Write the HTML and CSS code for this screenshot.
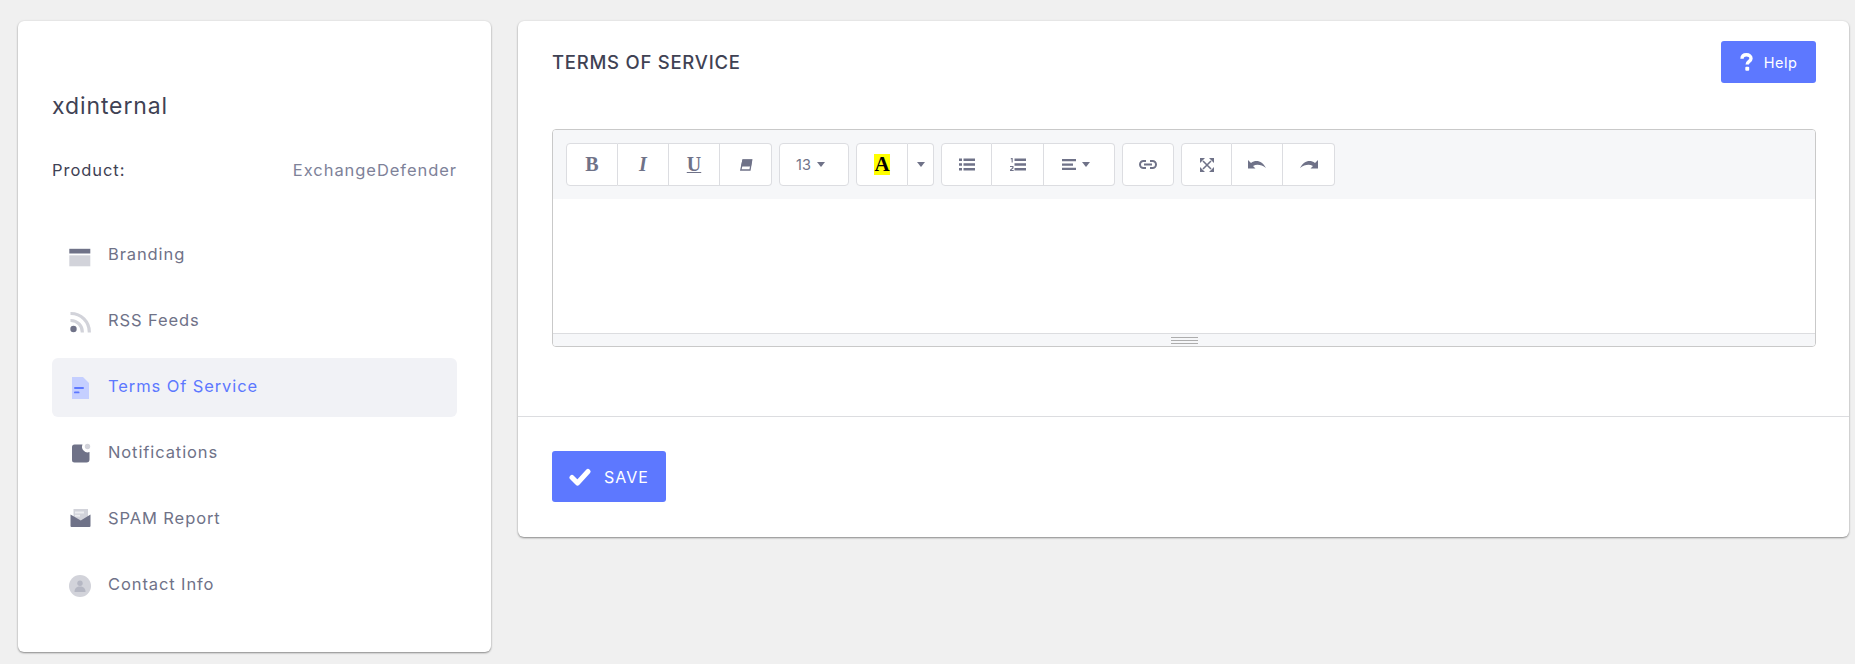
FILE: index.html
```html
<!DOCTYPE html>
<html lang="en">
<head>
<meta charset="utf-8">
<title>Terms Of Service</title>
<link rel="stylesheet" href="styles.css">
</head>
<body>
<div class="page">
  <aside class="card side">
    <h2 class="name">xdinternal</h2>
    <div class="product"><span class="product-label">Product:</span><span class="product-value">ExchangeDefender</span></div>
    <nav class="nav">
      <a class="nav-item">
        <svg class="nav-icon" viewBox="0 0 22 22"><rect x="0.3" y="3.8" width="21" height="4.7" fill="#6f7288"/><rect x="0.3" y="10.3" width="21" height="11" fill="#d2d3da"/></svg>
        <span>Branding</span>
      </a>
      <a class="nav-item">
        <svg class="nav-icon" viewBox="0 0 22 22"><path d="M1.500 2.500a18.500 18.500 0 0 1 18.800 19M1.500 9.500a11.500 11.500 0 0 1 11.800 12" fill="none" stroke="#d2d3da" stroke-width="3.2"/><circle cx="4.500" cy="18" r="3.200" fill="#6f7288"/></svg>
        <span>RSS Feeds</span>
      </a>
      <a class="nav-item active">
        <svg class="nav-icon" viewBox="0 0 22 22"><path d="M3 0h11l6 6v16H3z" fill="#c5cfff"/><rect x="5" y="10" width="10" height="2" rx="1" fill="#5d78ff"/><rect x="5" y="14.500" width="5.500" height="1.800" rx=".9" fill="#5d78ff"/></svg>
        <span>Terms Of Service</span>
      </a>
      <a class="nav-item">
        <svg class="nav-icon" viewBox="0 0 22 22"><path d="M5.500 1.500h8a5.600 5.600 0 0 0 7 7.500v7.500a3 3 0 0 1-3 3H5.500A2.500 2.500 0 0 1 3 17V4a2.500 2.500 0 0 1 2.500-2.500z" fill="#6f7288"/><circle cx="18.500" cy="3.500" r="2.700" fill="#d2d3da"/></svg>
        <span>Notifications</span>
      </a>
      <a class="nav-item">
        <svg class="nav-icon" viewBox="0 0 22 22"><path d="M4.500 0h14.500v10l-7.250 3-7.250-3z" fill="#d2d3da"/><rect x="6" y="2.500" width="9" height="2" fill="#fff" opacity=".6"/><rect x="6" y="5.800" width="5" height="1.800" fill="#fff" opacity=".6"/><path d="M1.500 5.500l10.250 6 9.750-6V17a1 1 0 0 1-1 1h-18a1 1 0 0 1-1-1z" fill="#6f7288"/></svg>
        <span>SPAM Report</span>
      </a>
      <a class="nav-item">
        <svg class="nav-icon" viewBox="0 0 22 22"><circle cx="11" cy="11" r="11" fill="#d2d3da"/><circle cx="11" cy="8.200" r="2.700" fill="#b5b7c3"/><path d="M5.500 17c0-3.800 2.500-5.400 5.500-5.400s5.500 1.600 5.500 5.400z" fill="#b5b7c3"/></svg>
        <span>Contact Info</span>
      </a>
    </nav>
  </aside>
  <main class="card content">
    <header class="content-head">
      <h1 class="title">TERMS OF SERVICE</h1>
      <button class="btn btn-help">
        <svg class="help-icon" viewBox="0 0 13 18"><path d="M2 5.800C2 3.200 3.900 1.800 6.500 1.800S11 3.200 11 5.400c0 3-3.800 2.900-3.800 6" fill="none" stroke="#fff" stroke-width="3.400"/><rect x="5.300" y="13.800" width="3.900" height="4" rx="1" fill="#fff"/></svg>
        <span>Help</span>
      </button>
    </header>
    <div class="content-body">
      <div class="editor">
        <div class="toolbar">
          <div class="group">
            <button class="tool w52 tool-text">B</button>
            <button class="tool tool-text ital">I</button>
            <button class="tool tool-text under">U</button>
            <button class="tool w52"><svg class="ico" viewBox="0 0 14 13"><path d="M4 1.500h8.700L11 11.500H1.800z" fill="none" stroke="#6f7288" stroke-width="1.300"/><path d="M3.500 1h9.700l-1.200 7H2z" fill="#6f7288"/></svg></button>
          </div>
          <div class="group">
            <button class="tool w70 size"><span>13</span><i class="caret"></i></button>
          </div>
          <div class="group">
            <button class="tool w52"><span class="color-a">A</span></button>
            <button class="tool w26"><i class="caret"></i></button>
          </div>
          <div class="group">
            <button class="tool"><svg class="ico-16" viewBox="0 0 16 13"><path d="M0 .5h3V3H0zM0 5.200h3v2.500H0zM0 10h3v2.500H0zM4.500 .5H16V3H4.500zM4.500 5.200H16v2.500H4.500zM4.500 10H16v2.500H4.500z" fill="#6f7288"/></svg></button>
            <button class="tool w52"><svg class="ico-16" viewBox="0 0 16 13"><path d="M4.500 .5H16V3H4.500zM4.500 5.200H16v2.500H4.500zM4.500 10H16v2.500H4.500z" fill="#6f7288"/><path d="M1.600 0h1.100v4.500H1.600V1.200H.7V.5zM0 8h3.500v2.200L1.300 12h2.400v1H0v-1.300L2.300 9.800V9H0z" fill="#6f7288"/></svg></button>
            <button class="tool w71 align"><svg class="ico-14" viewBox="0 0 14 11"><path d="M0 0h14v2.300H0zM0 4.400h11v2.300H0zM0 8.700h14V11H0z" fill="#6f7288"/></svg><i class="caret"></i></button>
          </div>
          <div class="group">
            <button class="tool w52"><svg class="ico-18" viewBox="0 0 18 9"><path d="M7 1H4.500a3.500 3.500 0 0 0 0 7H7M11 1h2.500a3.500 3.500 0 0 1 0 7H11M5 4.500h8" fill="none" stroke="#6f7288" stroke-width="2"/></svg></button>
          </div>
          <div class="group">
            <button class="tool"><svg class="ico" viewBox="0 0 14 14"><path d="M3 3l8 8M11 3l-8 8" stroke="#6f7288" stroke-width="1.600"/><path d="M0 0h5L0 5zM14 0v5L9 0zM0 14V9l5 5zM14 14H9l5-5z" fill="#6f7288"/></svg></button>
            <button class="tool"><svg class="ico-18" viewBox="0 0 18 9"><path d="M0 0v8.500h7.500L5 6C8.500 4 13.500 4.500 18 8 14.500 1.500 8.500-1 3 3z" fill="#6f7288"/></svg></button>
            <button class="tool w52"><svg class="ico-18" viewBox="0 0 18 9"><path d="M18 0v8.500h-7.500L13 6C9.500 4 4.500 4.500 0 8 3.500 1.500 9.500-1 15 3z" fill="#6f7288"/></svg></button>
          </div>
        </div>
        <div class="edit-area"></div>
        <div class="statusbar"><div class="grip"></div></div>
      </div>
    </div>
    <footer class="content-foot">
      <button class="btn btn-save">
        <svg class="check" viewBox="0 0 22 18"><path d="M3 9.500l5.500 5.500L19 3.500" fill="none" stroke="#fff" stroke-width="5" stroke-linecap="round" stroke-linejoin="round"/></svg>
        <span>SAVE</span>
      </button>
    </footer>
  </main>
</div>
</body>
</html>
```

FILE: styles.css
```css
* { box-sizing: border-box; }
html, body { margin: 0; padding: 0; }
body {
  background: #f0f0f0;
  font-family: Inter, "Open Sans", sans-serif;
  color: #3f4254;
  height: 664px;
  overflow: hidden;
}
.page {
  display: flex;
  align-items: flex-start;
  gap: 27px;
  padding: 21px 6px 0 18px;
}
.card {
  background: #fff;
  border-radius: 6px;
  box-shadow: 0 1px 2px rgba(0,0,0,.42), 0 0 3px rgba(0,0,0,.06);
}
.side {
  flex: 0 0 473px;
  height: 631px;
  padding: 69px 34px 0;
}
.name {
  margin: 0;
  font-size: 23px;
  line-height: 32px;
  font-weight: 400;
  letter-spacing: .9px;
  color: #3f4254;
}
.product {
  display: flex;
  justify-content: space-between;
  margin-top: 36px;
  font-size: 16.5px;
  line-height: 24px;
  letter-spacing: .95px;
}
.product-label { color: #3f4254; }
.product-value { color: #7e8299; }
.nav {
  margin-top: 44px;
  display: flex;
  flex-direction: column;
  gap: 7px;
}
.nav-item {
  display: flex;
  align-items: center;
  height: 59px;
  padding: 0 17px 4px;
  border-radius: 6px;
  font-size: 16.5px;
  letter-spacing: .9px;
  color: #6f7288;
}
.nav-item.active { background: #f1f2f6; color: #5d78ff; }
.nav-icon { width: 22px; height: 22px; margin-right: 17px; flex: none; position: relative; top: 2px; }
.content { flex: 1; height: 516px; display: flex; flex-direction: column; }
.content-head {
  display: flex;
  justify-content: space-between;
  align-items: flex-start;
  padding: 20px 33px 0 34px;
  height: 108px;
}
.title {
  margin: 0;
  font-size: 18.5px;
  line-height: 30px;
  font-weight: 500;
  letter-spacing: .75px;
  color: #3f4254;
  padding-top: 6px;
}
.btn {
  display: flex;
  align-items: center;
  justify-content: center;
  border: 0;
  border-radius: 3px;
  background: #5d78ff;
  color: #fff;
  font-family: inherit;
}
.btn-help { width: 95px; height: 42px; font-size: 14.5px; letter-spacing: .5px; gap: 11px; }
.help-icon { width: 13px; height: 18px; }
.content-body { padding: 0 33px 0 34px; height: 288px; border-bottom: 1px solid #dcdde0; }
.editor {
  height: 218px;
  border: 1px solid #c9c9c9;
  border-radius: 4px;
  display: flex;
  flex-direction: column;
  overflow: hidden;
}
.toolbar {
  background: #f6f7f9;
  height: 69px;
  padding: 13px 0 0 13px;
  display: flex;
  gap: 7px;
  align-items: flex-start;
}
.group { display: flex; height: 43px; }
.tool {
  width: 51px;
  height: 43px;
  background: #fff;
  border: 1px solid #dcdde1;
  border-left-width: 0;
  display: flex;
  align-items: center;
  justify-content: center;
  gap: 6px;
  padding: 0;
  color: #6f7288;
  font-family: inherit;
}
.tool:first-child { border-left-width: 1px; border-radius: 4px 0 0 4px; }
.tool:last-child { border-radius: 0 4px 4px 0; }
.tool:only-child { border-radius: 4px; }
.w26 { width: 26px; }
.w52 { width: 52px; }
.w70 { width: 70px; }
.w71 { width: 71px; }
.tool-text { font-family: "Liberation Serif", serif; font-size: 20px; font-weight: 700; }
.ital { font-style: italic; }
.under { text-decoration: underline; text-decoration-thickness: 1px; }
.size { font-size: 14.5px; padding-right: 7px; }
.align { padding-right: 6px; }
.caret {
  width: 0; height: 0;
  border-left: 4px solid transparent;
  border-right: 4px solid transparent;
  border-top: 5px solid #6f7288;
}
.color-a {
  background: #ff0;
  color: #000;
  font-family: "Liberation Serif", serif;
  font-weight: 700;
  font-size: 21px;
  line-height: 21px;
  width: 16px;
  text-align: center;
}
.ico { width: 14px; height: 14px; }
.ico-16 { width: 16px; height: 13px; }
.ico-14 { width: 14px; height: 11px; }
.ico-18 { width: 18px; height: 9px; }
.edit-area { flex: 1; background: #fff; }
.statusbar {
  height: 13px;
  background: #f6f7f9;
  border-top: 1px solid #dcdde0;
  display: flex;
  justify-content: center;
  padding-top: 3px;
}
.grip {
  width: 27px;
  height: 7px;
  border-top: 1px solid #adadad;
  border-bottom: 1px solid #adadad;
  position: relative;
}
.grip::after {
  content: "";
  position: absolute;
  left: 0; right: 0; top: 2px;
  border-top: 1px solid #adadad;
}
.content-foot { padding: 34px 34px 0; }
.btn-save { width: 114px; height: 51px; font-size: 16px; letter-spacing: 1px; gap: 13px; }
.check { width: 22px; height: 18px; }
```
